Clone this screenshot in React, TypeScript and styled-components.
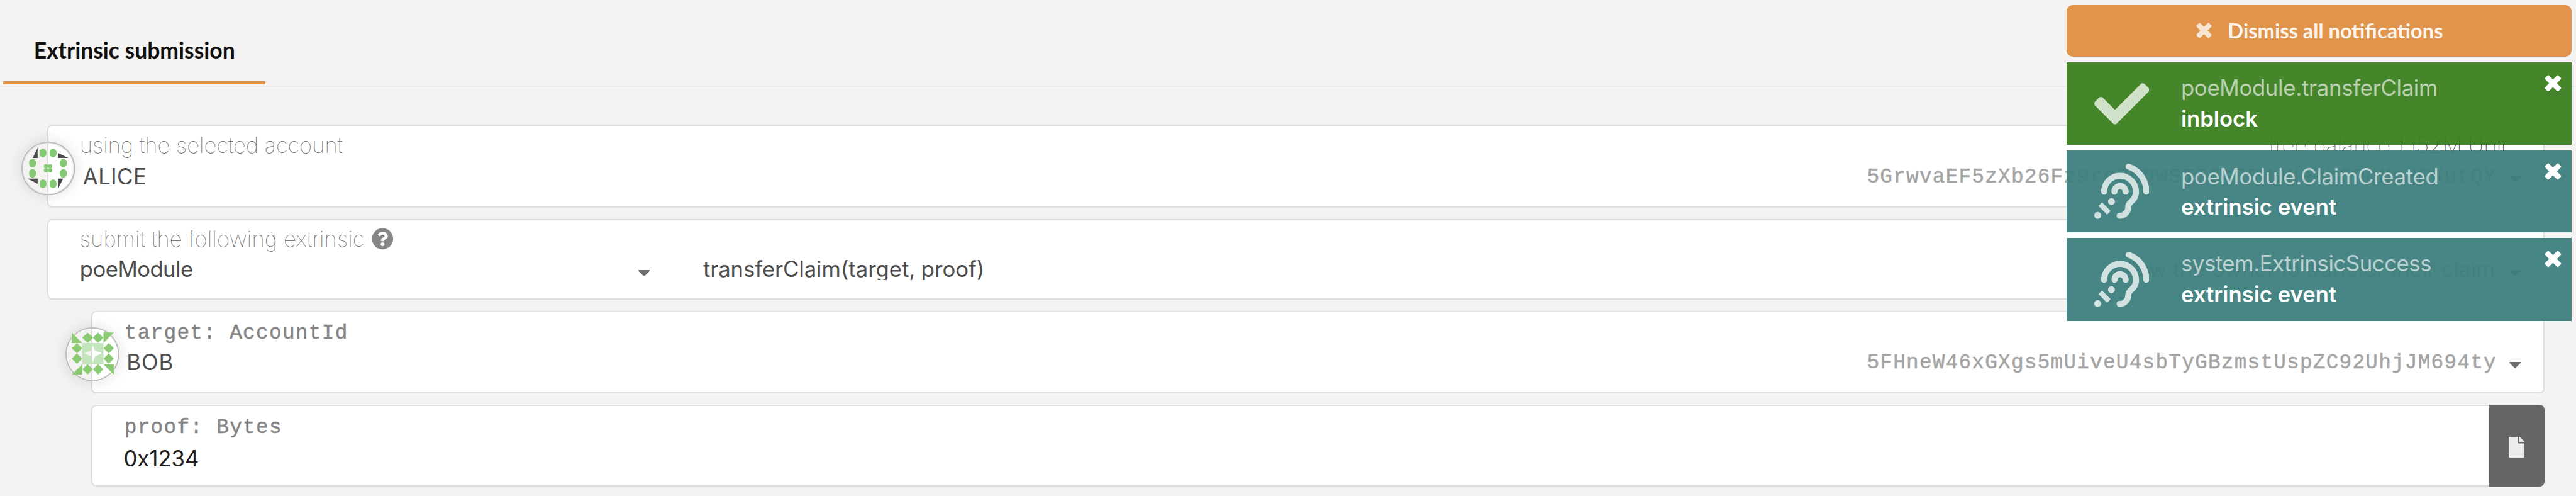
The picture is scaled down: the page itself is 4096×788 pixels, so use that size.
import React from 'react';
import styled, { createGlobalStyle } from 'styled-components';
import { FaAssistiveListeningSystems, FaCheck, FaFile, FaQuestionCircle } from 'react-icons/fa';

const u = (n: number) => `${((n * 4096) / 4604).toFixed(2)}px`;

const sans = `Inter, "Liberation Sans", sans-serif`;
const mono = `"Liberation Mono", monospace`;
const lato = `Lato, "Liberation Sans", sans-serif`;

const GlobalStyle = createGlobalStyle`
  * { box-sizing: border-box; }
  body { margin: 0; background: #f5f3f2; overflow: hidden; }
`;

const Page = styled.div`
  position: relative;
  height: 788px;
  overflow: hidden;
  background: #f5f3f2;
  color: #4e4e4e;
  font-family: ${sans};
  font-size: ${u(39)};
  line-height: ${u(48)};
  white-space: nowrap;
`;

const TabBar = styled.nav`
  display: flex;
  align-items: flex-start;
  height: ${u(155)};
  padding-left: ${u(6)};
  border-bottom: 2px solid #e6e5e8;
`;

const Tab = styled.div`
  width: ${u(468)};
  height: ${u(151)};
  padding: ${u(66.5)} 0 0 ${u(54.5)};
  border-bottom: ${u(6)} solid #e0954c;
  color: #0f0f0f;
  font-family: ${lato};
  font-weight: 700;
  font-size: ${u(39.9)};
`;

const Form = styled.main`
  display: flex;
  flex-direction: column;
  gap: ${u(20)};
  padding: ${u(68)} ${u(56)} 0 ${u(84.3)};
`;

const Params = styled.section`
  display: flex;
  flex-direction: column;
  gap: ${u(20)};
  margin: ${u(-10)} 0 0 ${u(-77.3)};
  padding: ${u(10)} 0 ${u(10)} ${u(146.5)};
  border-left: ${u(9)} solid #f2f1f1;
`;

const Card = styled.div<{ $height: number; $joined?: boolean }>`
  position: relative;
  flex: 1 1 auto;
  height: ${p => u(p.$height)};
  padding: ${u(9.6)} ${u(40)} 0 ${u(56)};
  background: #fff;
  border: 2px solid #dededf;
  border-radius: ${p => (p.$joined ? `${u(9)} 0 0 ${u(9)}` : u(9))};
  border-right-width: ${p => (p.$joined ? 0 : '2px')};
`;

const JoinedRow = styled.div`
  display: flex;
`;

const FileButton = styled.button`
  display: flex;
  align-items: center;
  justify-content: center;
  width: ${u(100.5)};
  height: ${u(146)};
  padding: ${u(6)} 0 0;
  border: 0;
  border-radius: 0 ${u(9)} ${u(9)} 0;
  background: #666;
  color: #ebebea;

  svg {
    width: ${u(28)};
    height: ${u(37.5)};
  }
`;

const LabelRow = styled.div`
  display: flex;
  align-items: flex-start;
  justify-content: space-between;
  height: ${u(48)};
`;

const Label = styled.label<{ $spacing?: number }>`
  display: flex;
  color: #5c5c5c;
  font-weight: 100;
  letter-spacing: ${p => p.$spacing ?? 0}em;
`;

const TypeLabel = styled.label`
  display: block;
  height: ${u(48)};
  color: #848484;

  span {
    padding-left: ${u(1.5)};
    font-family: ${mono};
    font-size: ${u(36.8)};
    letter-spacing: ${u(1.45)};
    line-height: 0;
    -webkit-text-stroke: 0.5px currentColor;
  }
`;

const HelpIcon = styled(FaQuestionCircle)`
  width: ${u(39)};
  height: ${u(39)};
  margin: ${u(4)} 0 0 ${u(13)};
  color: #868686;
`;

const Balance = styled.div`
  margin-right: ${u(26)};
  color: #5c5c5c;
  font-weight: 100;

  b {
    color: #222;
    font-weight: 100;
  }
`;

const ValueRow = styled.div<{ $top: number }>`
  display: flex;
  align-items: flex-start;
  margin-top: ${p => u(p.$top)};
`;

const Name = styled.span<{ $spacing: number; $indent?: number }>`
  flex: 1;
  padding-left: ${p => u(p.$indent ?? 0)};
  letter-spacing: ${p => p.$spacing}em;
`;

const Address = styled.span`
  color: #a4a4a4;
  font-family: ${mono};
  font-size: ${u(36.8)};
  letter-spacing: ${u(1.37)};
  line-height: ${u(52.6)};
  -webkit-text-stroke: 0.5px currentColor;
`;

const CaretIcon = styled.svg<{ $left: number; $top: number }>`
  flex: none;
  width: ${u(20.5)};
  height: ${u(11)};
  margin: ${p => u(p.$top)} 0 0 ${p => u(p.$left)};
  fill: #6b6b6b;
`;

const ModuleSelect = styled.div`
  display: flex;
  width: ${u(1018.5)};
`;

const MethodSelect = styled.div`
  display: flex;
  flex: 1;
  padding-left: ${u(95.5)};
`;

const Method = styled.span`
  flex: 1;
  height: ${u(43.8)};
  overflow: hidden;
  letter-spacing: -0.002em;
`;

const Doc = styled.span`
  color: #8a8a8a;
  font-weight: 300;
`;

const BytesInput = styled.div`
  margin-top: ${u(12)};
  color: #202020;
`;

const Identicon = styled.div`
  position: absolute;
  left: ${u(-48.4)};
  top: ${u(27.7)};
  width: ${u(96)};
  height: ${u(96)};
  border-radius: 50%;
  box-shadow: 0 0 ${u(26)} rgba(0, 0, 0, 0.13);

  svg {
    display: block;
    width: 100%;
    height: 100%;
  }
`;

const Toasts = styled.aside`
  position: absolute;
  top: ${u(9)};
  right: ${u(8)};
  display: flex;
  flex-direction: column;
  gap: ${u(10)};
  width: ${u(902)};
`;

const DismissButton = styled.button`
  display: flex;
  align-items: center;
  justify-content: center;
  gap: ${u(29)};
  height: ${u(92)};
  padding: 0 0 0 ${u(1)};
  border: 0;
  border-radius: ${u(11)};
  background: #e1954c;
  color: rgba(255, 255, 255, 0.93);
  font-family: ${lato};
  font-weight: 700;
  font-size: ${u(36.7)};
  line-height: ${u(44)};

  svg {
    width: ${u(28)};
    height: ${u(28)};
    opacity: 0.8;
  }
`;

const Toast = styled.div<{ $color: string; $height: number }>`
  display: flex;
  align-items: flex-start;
  height: ${p => u(p.$height)};
  padding: 0 ${u(18)} 0 ${u(48.7)};
  background: ${p => p.$color};
`;

const ToastIcon = styled.div`
  display: flex;
  align-items: center;
  align-self: stretch;
  width: ${u(155.3)};
  color: rgba(255, 255, 255, 0.75);

  svg {
    width: ${u(98.5)};
    height: ${u(98.5)};
  }
`;

const ToastBody = styled.div`
  flex: 1;
  padding-top: ${u(21.8)};
`;

const ToastTitle = styled.div<{ $spacing: number }>`
  color: rgba(255, 255, 255, 0.65);
  letter-spacing: ${p => p.$spacing}em;
`;

const ToastStatus = styled.div`
  margin-top: ${u(6.6)};
  color: #fff;
  font-weight: 600;
`;

const CloseButton = styled.div`
  display: flex;
  padding-top: ${u(22.4)};
  color: #fff;

  svg {
    width: ${u(30)};
    height: ${u(30)};
  }
`;

const CrossIcon = () => (
  <svg viewBox="0 0 88 88" fill="currentColor" stroke="currentColor" strokeWidth="8" strokeLinejoin="round">
    <path d="M19 5L44 29L69 5L83 19L59 44L83 69L69 83L44 59L19 83L5 69L29 44L5 19Z" />
  </svg>
);

const Caret = ({ left, top = 23.4 }: { left: number; top?: number }) => (
  <CaretIcon $left={left} $top={top} viewBox="0 0 20.5 11" preserveAspectRatio="none">
    <path d="M1.2 0H19.3Q21 .5 20 1.9L11.4 10.4Q10.2 11.4 9.1 10.4L.5 1.9Q-.5 .5 1.2 0Z" />
  </CaretIcon>
);

const dots: [number, number][] = [[141, 101], [195, 101], [85, 155], [250, 155], [85, 210], [250, 210], [141, 266], [195, 266]];
const centreDots: [number, number][] = [[157, 172], [179, 172], [157, 194], [179, 194]];
const diamonds: [number, number][] = [[137, 101], [193, 101], [80, 157], [80, 213], [250, 157], [250, 213], [137, 270], [193, 270]];

const AliceIdenticon = () => (
  <Identicon>
    <svg viewBox="25 40 288 288">
      <circle cx="169" cy="184" r="137" fill="none" stroke="#e9e9e9" strokeWidth="9" />
      <circle cx="169" cy="184" r="141" fill="none" stroke="#bababa" strokeWidth="6" />
      <g fill="#84ca75">
        {dots.map(([x, y]) => <ellipse key={`${x}-${y}`} cx={x} cy={y} rx="19" ry="23.5" />)}
        {centreDots.map(([x, y]) => <circle key={`${x}-${y}`} cx={x} cy={y} r="11.5" />)}
      </g>
      <path fill="#4b4b4b" d="M112 73V128H86ZM222 101L277 128H222ZM59 238H112V266ZM222 238H249L222 293Z" />
    </svg>
  </Identicon>
);

const BobIdenticon = () => (
  <Identicon>
    <svg viewBox="18 45 288 288">
      <circle cx="162" cy="189" r="141" fill="none" stroke="#bababa" strokeWidth="6" />
      <path fill="#c3e5bb" fillRule="evenodd" d="M108 129H222V243H108ZM163 139L177 170L214 184L177 200L164 233L152 198L117 185L152 172Z" />
      <path fill="#8aca72" d="M52 73L108 129H52ZM222 73H278L222 129ZM108 243V299H52ZM222 243H278V299Z" />
      <g fill="#8aca72">
        {diamonds.map(([x, y]) => <path key={`${x}-${y}`} d={`M${x} ${y - 28}l28 28l-28 28l-28 -28Z`} />)}
      </g>
    </svg>
  </Identicon>
);

const GREEN = 'rgba(59, 127, 31, 0.95)';
const TEAL = 'rgba(61, 127, 126, 0.95)';

const toasts = [
  { title: 'poeModule.transferClaim', status: 'inblock', color: GREEN, height: 148, spacing: -0.008, icon: <FaCheck /> },
  { title: 'poeModule.ClaimCreated', status: 'extrinsic event', color: TEAL, height: 146, spacing: -0.008, icon: <FaAssistiveListeningSystems /> },
  { title: 'system.ExtrinsicSuccess', status: 'extrinsic event', color: TEAL, height: 148, spacing: -0.012, icon: <FaAssistiveListeningSystems /> },
];

export default function App() {
  return (
    <Page>
      <GlobalStyle />
      <TabBar>
        <Tab>Extrinsic submission</Tab>
      </TabBar>
      <Form>
        <Card $height={148}>
          <AliceIdenticon />
          <LabelRow>
            <Label>using the selected account</Label>
            <Balance>free balance <b>1.152M Unit</b></Balance>
          </LabelRow>
          <ValueRow $top={8}>
            <Name $spacing={0.015} $indent={5.5}>ALICE</Name>
            <Address>5GrwvaEF5zXb26Fz9rcQpDWS57CtERHpNehXCPcNoHGKutQY</Address>
            <Caret left={23} />
          </ValueRow>
        </Card>
        <Card $height={144}>
          <LabelRow>
            <Label $spacing={0.004}>submit the following extrinsic<HelpIcon /></Label>
          </LabelRow>
          <ValueRow $top={6}>
            <ModuleSelect>
              <Name $spacing={-0.016}>poeModule</Name>
              <Caret left={0} top={25} />
            </ModuleSelect>
            <MethodSelect>
              <Method>transferClaim(target, proof)</Method>
              <Doc>Allow the owner to transfer their claim</Doc>
              <Caret left={26} top={25} />
            </MethodSelect>
          </ValueRow>
        </Card>
        <Params>
          <Card $height={148}>
            <BobIdenticon />
            <TypeLabel><span>target: AccountId</span></TypeLabel>
            <ValueRow $top={8}>
              <Name $spacing={0.03} $indent={5.5}>BOB</Name>
              <Address>5FHneW46xGXgs5mUiveU4sbTyGBzmstUspZC92UhjJM694ty</Address>
              <Caret left={23} />
            </ValueRow>
          </Card>
          <JoinedRow>
            <Card $height={146} $joined>
              <TypeLabel><span>proof: Bytes</span></TypeLabel>
              <BytesInput>0x1234</BytesInput>
            </Card>
            <FileButton><FaFile /></FileButton>
          </JoinedRow>
        </Params>
      </Form>
      <Toasts>
        <DismissButton><CrossIcon />Dismiss all notifications</DismissButton>
        {toasts.map(t => (
          <Toast key={t.title} $color={t.color} $height={t.height}>
            <ToastIcon>{t.icon}</ToastIcon>
            <ToastBody>
              <ToastTitle $spacing={t.spacing}>{t.title}</ToastTitle>
              <ToastStatus>{t.status}</ToastStatus>
            </ToastBody>
            <CloseButton><CrossIcon /></CloseButton>
          </Toast>
        ))}
      </Toasts>
    </Page>
  );
}
